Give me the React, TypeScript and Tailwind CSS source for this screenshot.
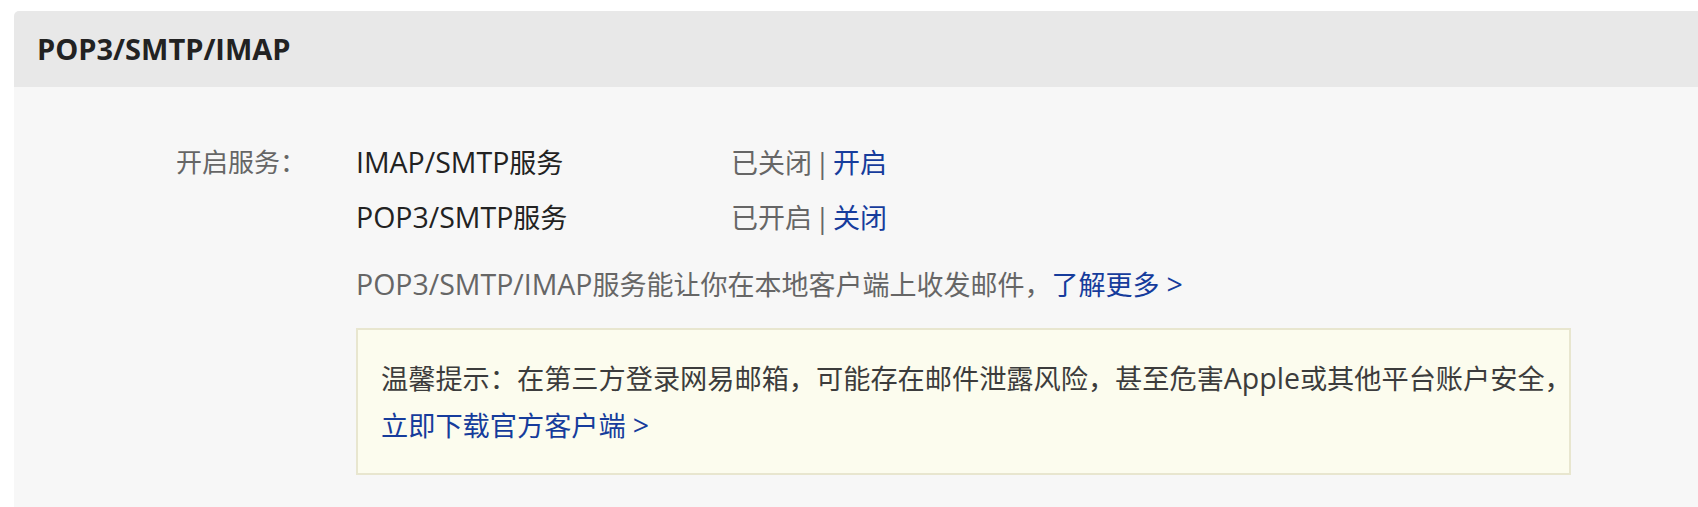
import type { ReactNode } from "react";

const font = { fontFamily: '"Open Sans", "Noto Sans CJK SC", sans-serif' };

// latin runs sit a bit wider than the CJK glyphs in the original font
const L = ({ children }: { children: ReactNode }) => (
  <span className="text-[28.5px]">{children}</span>
);

const Pipe = () => <span className="inline-block w-[21px] text-center">|</span>;

const App = () => {
  return (
    <div className="min-h-screen bg-white pt-[11px] pl-[14px]" style={font}>
      <div className="rounded-tl-[5px] overflow-hidden">
        {/* header */}
        <div className="h-[76px] bg-[#e8e8e8] flex items-center pl-[23px]">
          <h2 className="text-[29px] font-bold text-[#222]">POP3/SMTP/IMAP</h2>
        </div>

        {/* body */}
        <div className="bg-[#f7f7f7] pt-[48px] pb-[40px] flex text-[27px]">
          <div className="w-[342px] pl-[162px] leading-[55px] text-[26px] text-[#666]">开启服务：</div>
          <div className="flex-1">
            <div className="flex leading-[55px]">
              <span className="w-[375px] text-[#222]">
                <L>IMAP/SMTP</L>服务
              </span>
              <span className="text-[#666]">
                已关闭<Pipe />
                <a className="text-[#163c9c]">开启</a>
              </span>
            </div>
            <div className="flex leading-[55px]">
              <span className="w-[375px] text-[#222]">
                <L>POP3/SMTP</L>服务
              </span>
              <span className="text-[#666]">
                已开启<Pipe />
                <a className="text-[#163c9c]">关闭</a>
              </span>
            </div>
            <p className="mt-[12px] leading-[55px] text-[#666]">
              <L>POP3/SMTP/IMAP</L>服务能让你在本地客户端上收发邮件，
              <a className="text-[#163c9c]">
                了解更多 <L>&gt;</L>
              </a>
            </p>
            <div className="mt-[16px] w-[1215px] border-2 border-[#e8e6cf] bg-[#fcfcee] pl-[23px] pt-[25px] pb-[24px] leading-[47px] text-[27.2px] text-[#3c3c3c]">
              <p className="whitespace-nowrap">
                温馨提示：在第三方登录网易邮箱，可能存在邮件泄露风险，甚至危害<L>Apple</L>或其他平台账户安全，
              </p>
              <p>
                <a className="text-[#163c9c]">
                  立即下载官方客户端 <L>&gt;</L>
                </a>
              </p>
            </div>
          </div>
        </div>
      </div>
    </div>
  );
};

export default App;
